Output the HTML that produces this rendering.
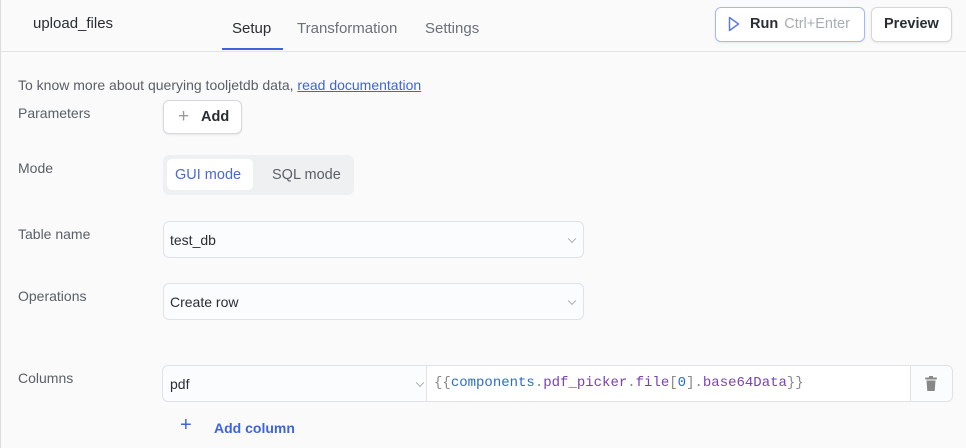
<!DOCTYPE html>
<html><head><style>
*{box-sizing:border-box;margin:0;padding:0}
body{width:966px;height:448px;background:#fafafa;font-family:"Liberation Sans",sans-serif;font-size:14px;color:#2a2d33;position:relative;overflow:hidden}
.a{position:absolute}
.lbl{color:#5a5f66;font-size:14px}
.btn{background:#fff;border:1px solid #d6d8dc;border-radius:6px;box-shadow:0 1px 2px rgba(0,0,0,.08)}
.sel{background:#fbfcfd;border:1px solid #e0e2e6;border-radius:6px}
.chev{position:absolute;right:8px;top:50%;width:6px;height:6px;border-right:1px solid #aaa;border-bottom:1px solid #aaa;transform:translateY(-70%) rotate(45deg)}
</style></head><body>
<div class="a" style="left:0;top:0;width:1px;height:448px;background:#ddd"></div>
<div class="a" style="left:33px;top:15px;font-size:15px">upload_files</div>
<div class="a" style="left:232px;top:20px;font-size:15px;color:#2a2d33">Setup</div>
<div class="a" style="left:222px;top:48px;width:61px;height:2px;background:#3e63dd"></div>
<div class="a" style="left:297px;top:20px;font-size:15px;color:#6b7078">Transformation</div>
<div class="a" style="left:425px;top:20px;font-size:15px;color:#6b7078">Settings</div>
<div class="a" style="left:0;top:51px;width:966px;height:1px;background:#e3e4e6"></div>
<div class="a btn" style="left:715px;top:7px;width:150px;height:35px;border-color:#a6b8f2"></div>
<svg class="a" style="left:728px;top:16px" width="12" height="16"><path d="M1.5 1.5 L10.5 8 L1.5 14.5 Z" fill="none" stroke="#5b7be8" stroke-width="1.5" stroke-linejoin="round"/></svg>
<div class="a" style="left:750px;top:16px;font-size:14.5px;font-weight:bold;color:#2a2d33">Run <span style="font-weight:normal;color:#a8adb4;margin-left:2px">Ctrl+Enter</span></div>
<div class="a btn" style="left:871px;top:7px;width:81px;height:35px"></div>
<div class="a" style="left:884px;top:16px;font-size:14.5px;font-weight:bold">Preview</div>

<div class="a" style="left:18px;top:77px;color:#5a5f66">To know more about querying tooljetdb data, <span style="color:#3e63dd;text-decoration:underline">read documentation</span></div>
<div class="a lbl" style="left:18px;top:105px">Parameters</div>
<div class="a btn" style="left:163px;top:100px;width:79px;height:34px"></div>
<div class="a" style="left:178px;top:106px;font-size:19px;color:#999;font-weight:300">+</div>
<div class="a" style="left:201px;top:109px;font-weight:bold;font-size:14.5px">Add</div>

<div class="a lbl" style="left:18px;top:160px">Mode</div>
<div class="a" style="left:163px;top:155px;width:191px;height:40px;background:#eff0f2;border-radius:6px"></div>
<div class="a" style="left:167px;top:159px;width:86px;height:31px;background:#fff;border-radius:5px"></div>
<div class="a" style="left:175px;top:167px;color:#4a67d6;font-size:14.5px">GUI mode</div>
<div class="a" style="left:272px;top:167px;color:#5a5f66;font-size:14.5px">SQL mode</div>

<div class="a lbl" style="left:18px;top:226px">Table name</div>
<div class="a sel" style="left:163px;top:221px;width:421px;height:37px"><span class="a" style="left:6px;top:10px">test_db</span><i class="chev"></i></div>
<div class="a lbl" style="left:18px;top:288px">Operations</div>
<div class="a sel" style="left:163px;top:283px;width:421px;height:37px"><span class="a" style="left:6px;top:10px">Create row</span><i class="chev"></i></div>

<div class="a lbl" style="left:18px;top:370px">Columns</div>
<div class="a sel" style="left:162px;top:365px;width:791px;height:37px;overflow:hidden">
 <span class="a" style="left:7px;top:10px">pdf</span>
 <i class="chev" style="right:529px"></i>
 <div class="a" style="left:263px;top:0;width:485px;height:37px;background:#fff;border-left:1px solid #e0e2e6;border-right:1px solid #e0e2e6"></div>
 <div class="a" style="left:271px;top:9px;font-family:'Liberation Mono',monospace;font-size:14px;color:#888"><span>{{</span><span style="color:#2a6cc9">components</span>.<span style="color:#7b3fb5">pdf_picker</span>.<span style="color:#7b3fb5">file</span>[<span style="color:#2a6cc9">0</span>].<span style="color:#7b3fb5">base64Data</span>}}</div>
 <svg class="a" style="left:761px;top:10px" width="14" height="16"><rect x="1" y="1.5" width="12" height="2" rx="1" fill="#888"/><rect x="5" y="0" width="4" height="2" fill="#888"/><path d="M2.5 4.5h9l-.8 10.5h-7.4z" fill="#888"/></svg>
</div>
<div class="a" style="left:180px;top:414px;font-size:20px;color:#3e63dd">+</div>
<div class="a" style="left:214px;top:420px;font-size:14px;font-weight:bold;color:#3e63dd">Add column</div>
</body></html>
